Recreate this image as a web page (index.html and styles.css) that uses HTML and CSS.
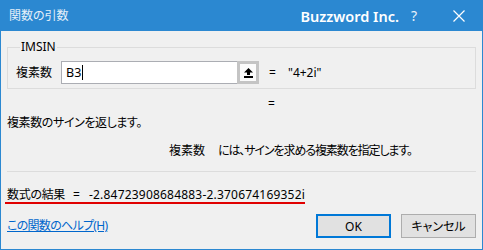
FILE: index.html
```html
<!DOCTYPE html>
<html lang="ja">
<head>
<meta charset="utf-8">
<title>関数の引数</title>
<link rel="stylesheet" href="styles.css">
</head>
<body>
<div class="window">
  <div class="titlebar">
    <span class="title">関数の引数</span>
    <span class="brand">Buzzword Inc.</span>
    <span class="help">?</span>
    <span class="close">
      <svg width="12" height="12" viewBox="0 0 12 12"><path d="M0.5 0.5 L11.5 11.5 M11.5 0.5 L0.5 11.5" stroke="#fff" stroke-width="1.2" fill="none"/></svg>
    </span>
  </div>
  <div class="content">
    <fieldset class="group">
      <legend>IMSIN</legend>
      <div class="arg-row">
        <label class="arg-label">複素数</label>
        <div class="ref-input">
          <span class="field">B3<span class="caret"></span></span>
          <span class="collapse-btn">
            <span class="collapse-inner">
              <svg width="9" height="10" viewBox="0 0 9 10"><path d="M4.5 0 L9 4.5 L6 4.5 L6 7 L3 7 L3 4.5 L0 4.5 Z" fill="#000"/><rect x="0" y="8" width="9" height="2" fill="#000"/></svg>
            </span>
          </span>
        </div>
        <span class="eq">=</span>
        <span class="val">"4+2i"</span>
      </div>
    </fieldset>
    <div class="eq-row">=</div>
    <p class="desc">複素数のサインを返します。</p>
    <p class="arg-desc"><span class="arg-name">複素数</span><span class="arg-text">には、サインを求める複素数を指定します。</span></p>
    <div class="sep"></div>
    <div class="result-row"><span class="result"><span class="result-label">数式の結果</span><span class="result-eq">=</span><span class="result-val">-2.84723908684883-2.370674169352i</span></span></div>
    <div class="footer">
      <a class="help-link" href="#">この関数のヘルプ(H)</a>
      <div class="buttons">
        <button class="btn btn-default">OK</button>
        <button class="btn">キャンセル</button>
      </div>
    </div>
  </div>
</div>
</body>
</html>
```
FILE: styles.css
```css
* { box-sizing: border-box; }
html, body { margin: 0; padding: 0; }
body {
  width: 483px;
  height: 250px;
  background: #f0f0f0;
  font-family: "Noto Sans", "Noto Sans CJK JP", sans-serif;
  font-size: 12px;
  color: #000;
  font-feature-settings: "palt";
}
.window {
  width: 483px;
  height: 250px;
  border: 1px solid #2b88d1;
  border-top: 0;
  background: #f0f0f0;
  display: flex;
  flex-direction: column;
}
.titlebar {
  height: 31px;
  background: #2b88d1;
  color: #fff;
  display: flex;
  align-items: center;
  padding-left: 9px;
  margin: 0 -1px;
}
.title {
  font-size: 12px;
  color: #e6f0f9;
  flex: 1;
  line-height: 16px;
  padding-top: 1px;
}
.brand {
  font-size: 14.5px;
  font-weight: 600;
  letter-spacing: 0;
  line-height: 18px;
}
.help {
  font-size: 14px;
  margin-left: 12px;
  width: 10px;
  line-height: 18px;
  color: #eaf2fa;
}
.close {
  display: flex;
  margin-left: 32px;
  margin-right: 18px;
}
.content {
  padding: 0 6px;
  display: flex;
  flex-direction: column;
}
.group {
  margin: 9px 0 0;
  border: 1px solid #dcdcdc;
  padding: 7px 8px 4px 8px;
}
.group legend {
  padding: 0 1px;
  margin-left: 4px;
  line-height: 14px;
  height: 14px;
}
.arg-row {
  display: flex;
  align-items: center;
  height: 23px;
}
.arg-label {
  width: 45px;
  line-height: 16px;
}
.ref-input {
  display: flex;
  height: 23px;
}
.field {
  width: 176px;
  height: 23px;
  background: #fff;
  border: 1px solid #abadb3;
  border-right: 0;
  padding-left: 4px;
  line-height: 20px;
  display: flex;
  align-items: center;
  font-size: 12.5px;
}
.caret {
  display: inline-block;
  width: 1px;
  height: 15px;
  background: #000;
  margin-left: 1px;
}
.collapse-btn {
  width: 22px;
  height: 23px;
  background: #c4c4c4;
  padding: 3px;
  display: flex;
}
.collapse-inner {
  flex: 1;
  background: #fbfbfb;
  display: flex;
  align-items: center;
  justify-content: center;
}
.eq {
  margin-left: 10px;
  width: 19px;
}
.eq-row {
  margin-top: 7px;
  padding-left: 261px;
  line-height: 16px;
  height: 16px;
}
.desc {
  margin: 3px 0 0;
  line-height: 16px;
  letter-spacing: -0.4px;
}
.arg-desc {
  margin: 12px 0 0;
  padding-left: 162px;
  line-height: 16px;
  display: flex;
}
.arg-name {
  width: 49px;
}
.arg-text {
  letter-spacing: -1.1px;
}
.sep {
  margin-top: 12px;
  height: 1px;
  background: #dcdcdc;
}
.result-row {
  margin-top: 16px;
  display: flex;
}
.result {
  display: inline-flex;
  line-height: 14px;
  margin-left: -2px;
  padding-left: 2px;
  border-bottom: 2px solid #e00000;
}
.result-label {
  letter-spacing: -0.3px;
}
.result-eq {
  margin-left: 8px;
}
.result-val {
  margin-left: 9px;
  letter-spacing: 0.2px;
}
.footer {
  margin-top: 10px;
  display: flex;
  align-items: center;
  justify-content: space-between;
}
.help-link {
  color: #0066cc;
  text-decoration: underline;
  line-height: 16px;
  letter-spacing: -0.7px;
}
.buttons {
  display: flex;
  gap: 10px;
}
.btn {
  width: 75px;
  height: 24px;
  background: #e1e1e1;
  border: 1px solid #adadad;
  font-family: inherit;
  font-size: 12px;
  font-feature-settings: "palt";
  color: #000;
  padding: 0;
}
.btn-default {
  border: 2px solid #0078d7;
}
```
